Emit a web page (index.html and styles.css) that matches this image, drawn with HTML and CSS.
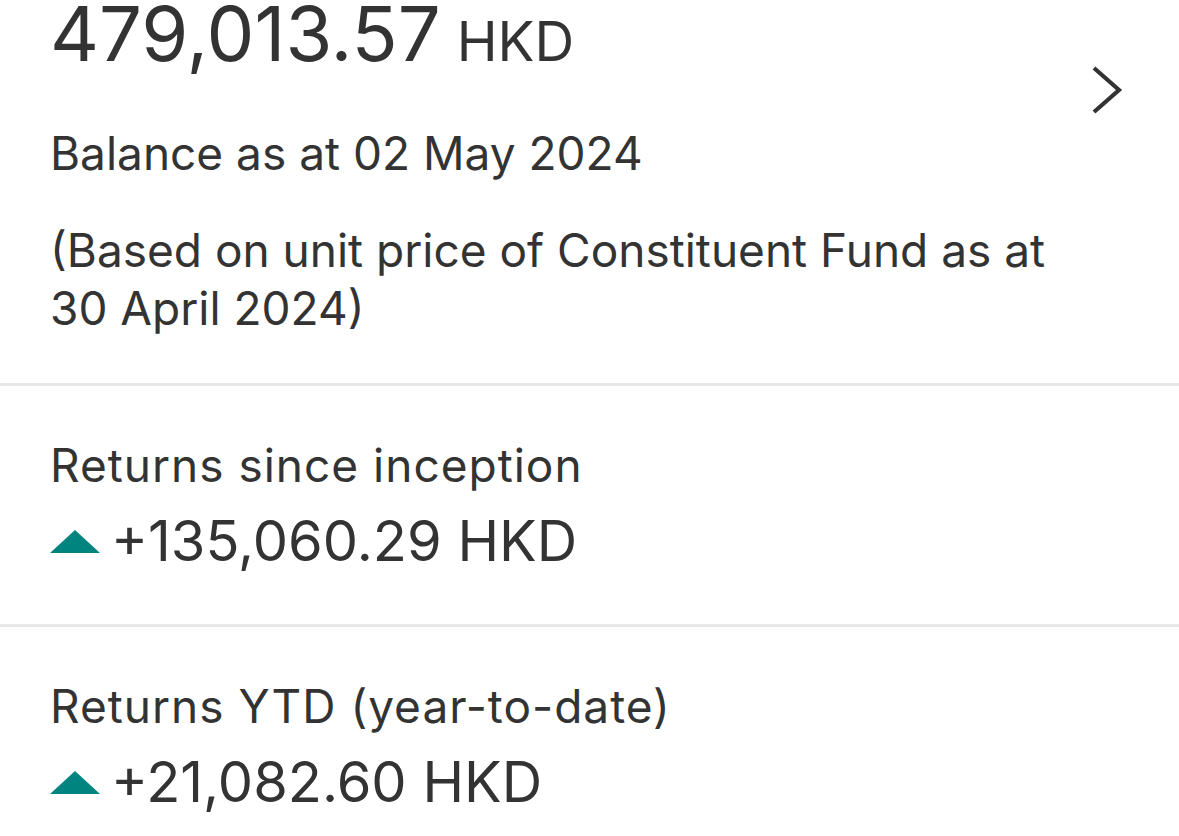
FILE: index.html
```html
<!DOCTYPE html>
<html>

<head>
  <meta charset="utf-8" />
  <title>Account balance</title>
  <link rel="stylesheet" href="styles.css">
</head>

<body>
  <div class="summary">
    <div class="summary-text">
      <div class="balance"><span class="amount">479,013.57</span><span class="cur">HKD</span></div>
      <p class="asat">Balance as at 02 May 2024</p>
      <p class="note">(Based on unit price of Constituent Fund as at 30 April 2024)</p>
    </div>
    <svg class="chevron" width="34" height="50" viewBox="0 0 34 50">
      <path d="M4 3 L29 25 L4 47" fill="none" stroke="#333" stroke-width="4.2" />
    </svg>
  </div>

  <div class="row">
    <p class="label">Returns since inception</p>
    <div class="value"><span class="up"></span>+135,060.29 HKD</div>
  </div>

  <div class="row last">
    <p class="label">Returns YTD (year-to-date)</p>
    <div class="value"><span class="up"></span>+21,082.60 HKD</div>
  </div>
</body>

</html>
```

FILE: styles.css
```css
* {
  box-sizing: border-box;
}

body {
  margin: 0;
  background: #fff;
  color: #333;
  font-family: Inter, "Noto Sans", sans-serif;
  overflow: hidden;
}

p {
  margin: 0;
}

.summary {
  display: flex;
  justify-content: space-between;
  padding: 0 55px 46px 50px;
  border-bottom: 3px solid #e8e8e8;
}

.summary-text {
  width: 1010px;
}

/* page is scrolled a little: the big figure sits right at the top */
.balance {
  display: flex;
  align-items: baseline;
  height: 66px;
  line-height: 66px;
  white-space: nowrap;
}

.balance .amount {
  font-size: 76px;
}

.balance .cur {
  margin-left: 16px;
  font-size: 55px;
}

.asat {
  margin-top: 58px;
  font-size: 46px;
  line-height: 58px;
}

.note {
  margin-top: 39px;
  font-size: 46px;
  line-height: 58px;
}

.chevron {
  margin-top: 65px;
  flex: none;
}

.row {
  padding: 50px 50px 48px;
  border-bottom: 3px solid #e8e8e8;
}

.row.last {
  border-bottom: 0;
}

.label {
  font-size: 46px;
  line-height: 58px;
  letter-spacing: 1px;
}

.value {
  display: flex;
  align-items: center;
  margin-top: 12px;
  font-size: 56px;
  line-height: 70px;
}

.up {
  width: 0;
  height: 0;
  margin-right: 11px;
  border-left: 25px solid transparent;
  border-right: 25px solid transparent;
  border-bottom: 23px solid #00847f;
}
```
